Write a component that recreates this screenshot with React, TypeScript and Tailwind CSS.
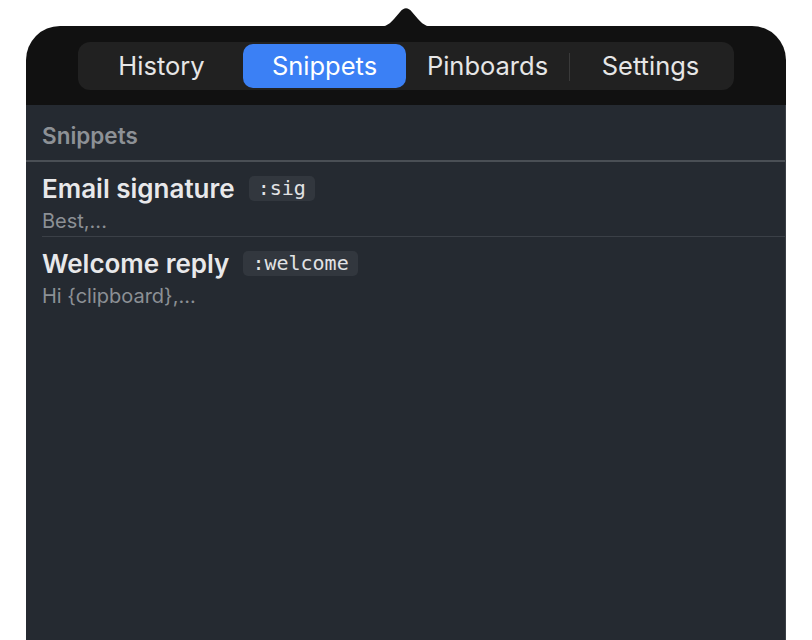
import React from 'react';

const tabs = ['History', 'Snippets', 'Pinboards', 'Settings'];

const snippets = [
  { title: 'Email signature', keyword: ':sig', preview: 'Best,...' },
  { title: 'Welcome reply', keyword: ':welcome', preview: 'Hi {clipboard},...' },
];

const App = () => {
  const active = 1;

  return (
    <div
      className="relative w-[812px] h-[640px] bg-white overflow-hidden pt-[26px] pl-[26px]"
      style={{ fontFamily: 'Inter, "Noto Sans", sans-serif' }}
    >
      {/* popover arrow */}
      <svg className="absolute left-[374px] top-[4px]" width="64" height="24" viewBox="0 0 64 24">
        <path d="M0 23 C10 23 14 22 20 15 L26 8 C30 3 34 3 38 8 L44 15 C50 22 54 23 64 23 L64 24 L0 24 Z" fill="#111111" />
      </svg>

      <div className="flex flex-col w-[760px] h-[614px] rounded-t-[34px] bg-[#111111] overflow-hidden">
        <div className="px-[52px] pt-4 pb-[15px]">
          <div className="grid grid-cols-4 h-12 p-[2px] rounded-xl bg-[#212121]">
            {tabs.map((tab, i) => (
              <div key={tab} className="relative flex items-center justify-center">
                {i > 0 && i !== active && i !== active + 1 && (
                  <div className="absolute left-0 top-[9px] h-[28px] w-px bg-[#3a3a3a]" />
                )}
                <div
                  className={`flex items-center justify-center w-full h-full rounded-[10px] text-[25.5px] ${
                    i === active ? 'bg-[#3b80f5] text-white' : 'text-[#e6e6e6]'
                  }`}
                >
                  {tab}
                </div>
              </div>
            ))}
          </div>
        </div>

        <div className="flex-1 bg-[#252a31] border-r border-[#3a3f45]">
          <div className="h-[57px] flex items-center pt-[6px] px-4 border-b-2 border-[#4a4f55]">
            <span className="text-[22.5px] font-semibold text-[#8d9196]">Snippets</span>
          </div>

          {snippets.map((s, i) => (
            <div key={s.title} className="pl-4">
              <div className={`pt-[11px] pb-[4px] ${i === 0 ? 'border-b border-[#3b4047]' : ''}`}>
                <div className="flex items-center gap-[14px] h-[30px]">
                  <span className="text-[26px] font-semibold text-[#e8e8ea]">{s.title}</span>
                  <span
                    className="px-[9px] h-[25px] flex items-center rounded-[5px] bg-[#32373e] text-[20px] text-[#e2e3e5]"
                    style={{ fontFamily: '"DejaVu Sans Mono", monospace' }}
                  >
                    {s.keyword}
                  </span>
                </div>
                <div className="mt-[7px] h-[22px] flex items-center text-[20px] text-[#8c9095]">{s.preview}</div>
              </div>
            </div>
          ))}
        </div>
      </div>
    </div>
  );
};

export default App;
